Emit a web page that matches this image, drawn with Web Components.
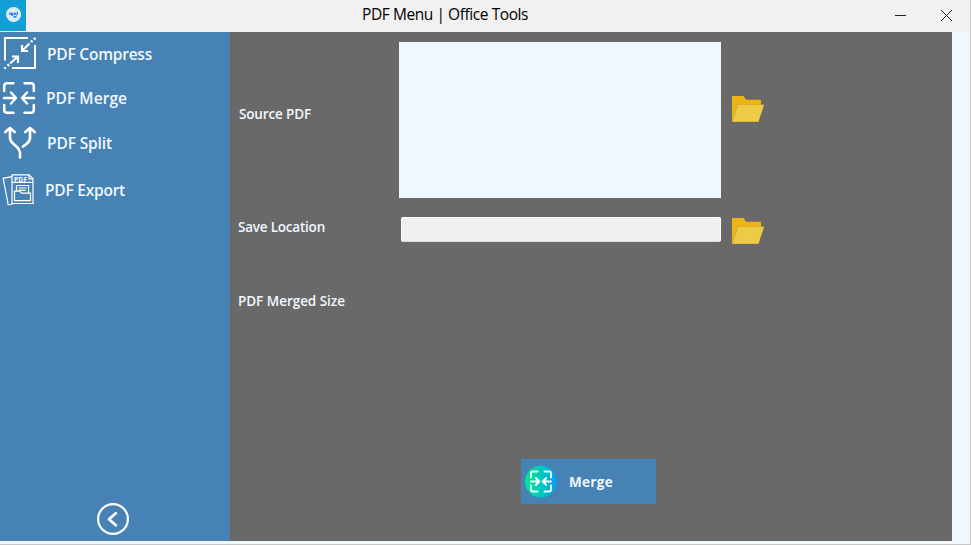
<!DOCTYPE html>
<html lang="en">
<head>
<meta charset="utf-8">
<title>PDF Menu | Office Tools</title>
<style>
html,body{margin:0;height:545px;overflow:hidden;font-family:"Open Sans","Noto Sans",sans-serif}
</style>
</head>
<body>
<office-window></office-window>
<script>
const define = (name, html, after) => customElements.define(name, class extends HTMLElement {
  connectedCallback() {
    if (this.shadowRoot) return;
    const t = document.createElement('template');
    t.innerHTML = html;
    this.attachShadow({mode: 'open'}).append(t.content.cloneNode(true));
    if (after) after(this);
  }
});

// Text label; the width attribute sets its measured length through letter spacing.
define('ui-label', `<style>:host{display:block;white-space:nowrap}span{display:inline-block}</style><span><slot></slot></span>`, el => {
  const s = el.shadowRoot.querySelector('span');
  const n = el.textContent.length, w = +el.getAttribute('width');
  if (w) s.style.letterSpacing = ((w - s.getBoundingClientRect().width) / n) + 'px';
});

define('folder-button', `<style>:host{display:block;width:32px;height:26px}svg{display:block}</style>
<svg width="32" height="26" viewBox="0 0 32 26"><path fill="#ebb514" d="M0 0h11.5l2.500 3.700h15V10L5 26H0z"/><path fill="#cfa637" d="M0 26L5.500 8.500H32L26.500 26z"/><path fill="#edcb45" d="M.7 25.500L5.900 9H32l-5.700 16.500z"/></svg>`);

define('nav-item', `<style>:host{display:flex;align-items:center;color:#f0f8ff;font-size:15.500px;font-weight:600}
::slotted(svg){display:block;flex:none;width:40px;height:100%}
ui-label{line-height:24px}</style><slot name="icon"></slot><slot></slot>`);

define('title-bar', `<style>
:host{display:flex;height:32px;background:#f1f1f1;color:#000}
.app{width:26px;height:31px;background:#119fd6}
ui-label{margin-left:336px;font-size:15.500px;line-height:29px}
.controls{margin-left:auto;width:90px;height:32px}svg{display:block}
</style>
<div class="app"><svg width="26" height="31"><circle cx="13.600" cy="14.500" r="7.600" fill="#dcecf9"/><path fill="#2b80f5" d="M9 12.800h4.500v3H11v-1H9zM14 12.800h2.500v2H14zM13.500 16h3v1.700h-3z"/><path d="M17.500 11.500v3l-1.500 1" fill="none" stroke="#2588ef"/></svg></div>
<ui-label width="166">PDF Menu | Office Tools</ui-label>
<div class="controls"><svg width="90" height="32" fill="none" stroke="#222"><path d="M15 15.500h11"/><path d="M61 10l11 11M72 10l-11 11"/></svg></div>`);

define('side-nav', `<style>
:host{display:flex;flex-direction:column;width:230px;background:#4682b4}
nav{display:grid;grid-template-rows:43px 45px 45px 50px}
.a{margin-left:7px}.b{margin-left:6px}.c{margin-left:5px}
.back{margin:auto 0 6px 97px;width:32px;height:32px}
svg{fill:none;stroke:#fff;display:block}
</style>
<nav>
<nav-item><svg slot="icon" viewBox="0 32 40 43" stroke-width="2"><path d="M28 38H5v22.500M12 68h23V45"/><path stroke-width="2.200" d="M12 56.500h6v6.500M18 56.500l-8 7M22 45v6h6M22 51l7.500-7.500"/><path stroke-width="2.400" d="M7.500 65.800l1.500-1.400M4.300 68.700l1.400-1.400M31 42l1.400-1.400M34 39.300l1.400-1.400"/></svg><ui-label class="a" width="105">PDF Compress</ui-label></nav-item>
<nav-item><svg slot="icon" viewBox="0 75 40 45" stroke-width="2.500" stroke-linecap="round" stroke-linejoin="round"><path d="M13.500 83.200H7q-2.800 0-2.800 2.800v5M24.500 83.200H31q2.800 0 2.800 2.800v5M13.500 112.800H7q-2.800 0-2.800-2.800v-5M24.500 112.800H31q2.800 0 2.800-2.800v-5M4 98h11.500M34 98H22.500M11 92.500l5 5.500-5 5.500M27 92.500L22 98l5 5.500"/></svg><ui-label class="b" width="81">PDF Merge</ui-label></nav-item>
<nav-item><svg slot="icon" viewBox="0 120 40 45" stroke-width="2.700" stroke-linecap="round" stroke-linejoin="round"><path d="M5.300 132l4.700-4 4.700 4M25.300 132l4.700-4 4.700 4M10 129v8.500q0 3.500 3 6l4 3.500q3 3 3 6v4.500M30 129v8.500q0 3.500-3 6l-4 3"/></svg><ui-label class="a" width="65">PDF Split</ui-label></nav-item>
<nav-item><svg slot="icon" viewBox="0 165 40 50" stroke="#e5edf5" stroke-width="1.200"><path d="M11.500 176.700l-8.300 1.600 5 26.500 5-.8M12 174.800h17l4 4v24.700H12zM29 174.800v4h4M12 182.300h21"/><path stroke-width="1.200" d="M14.500 200.700v-9.500h5l2 2h9v7.500zM16.500 191v-5.500h12v7.500M18.500 188h8M18.500 190.300h7M11.500 203.500h22"/><text x="14" y="181.500" fill="#fff" stroke="none" font-size="6.500" font-weight="700" textLength="13">PDF</text></svg><ui-label class="c" width="80">PDF Export</ui-label></nav-item>
</nav>
<svg class="back" viewBox="0 0 32 32"><circle cx="16" cy="16" r="14.900" stroke-width="2.200"/><path stroke-width="2.800" stroke-linecap="round" stroke-linejoin="round" d="M18.800 10.200L12 16.200l6.800 6"/></svg>`);

define('action-button', `<style>:host{display:flex;align-items:center;width:135px;height:45px;background:#4682b4;color:#f0f8ff;font-size:13.500px;font-weight:700}
svg{margin-left:4px;flex:none}ui-label{margin-left:12px;line-height:20px}</style>
<svg width="32" height="33" viewBox="0.500 0 32 33"><defs><linearGradient id="g"><stop stop-color="#02e78a"/><stop offset=".5" stop-color="#00c9bd"/><stop offset="1" stop-color="#049bfb"/></linearGradient></defs><circle cx="16.500" cy="16.500" r="16" fill="url(#g)"/><path fill="none" stroke="#f4ffff" stroke-width="1.900" stroke-linecap="round" stroke-linejoin="round" d="M13 6.500H8.500q-2 0-2 2v4M20 6.500h4.500q2 0 2 2v4M13 26.500H8.500q-2 0-2-2v-4M20 26.500h4.500q2 0 2-2v-4M6.500 16.500h8M26.500 16.500h-8M11.300 13l3.500 3.500-3.500 3.500M21.700 13l-3.500 3.500 3.500 3.500"/></svg>
<ui-label width="44">Merge</ui-label>`);

define('merge-form', `<style>
:host{display:flex;flex-direction:column;width:722px;background:#696969;color:#f0f8ff;font-size:13.500px;font-weight:600}
.row{display:grid;grid-template-columns:161px 330px 32px;padding-left:8px}
ui-label{line-height:20px}
.list{height:156px;width:322px;background:#f0f8ff}
.field{box-sizing:border-box;height:25px;width:320px;margin-left:2px;background:#f0f0f0;border:1.500px solid #fff;border-bottom-color:#ddd;border-radius:2px}
.r1{margin-top:10px}.r1 ui-label{margin:62px 0 0 1px}.r1 folder-button{margin:54px 0 0 3px}
.r2{margin-top:19px}.r2 folder-button{margin:1px 0 0 3px}
.r3{margin-top:47px}
action-button{margin:148px 0 0 291px}
</style>
<div class="row r1"><ui-label width="72">Source PDF</ui-label><div class="list"></div><folder-button></folder-button></div>
<div class="row r2"><ui-label width="87">Save Location</ui-label><div class="field"></div><folder-button></folder-button></div>
<div class="row r3"><ui-label width="107">PDF Merged Size</ui-label></div>
<action-button></action-button>`);

define('office-window', `<style>
:host{display:grid;box-sizing:border-box;width:971px;height:545px;grid-template-rows:32px 509px;background:#f0f8ff;border-right:1px solid #c8c8c8;border-bottom:1px solid #c8c8c8}
.body{display:flex}
</style><title-bar></title-bar><div class="body"><side-nav></side-nav><merge-form></merge-form></div>`);
</script>
</body>
</html>
